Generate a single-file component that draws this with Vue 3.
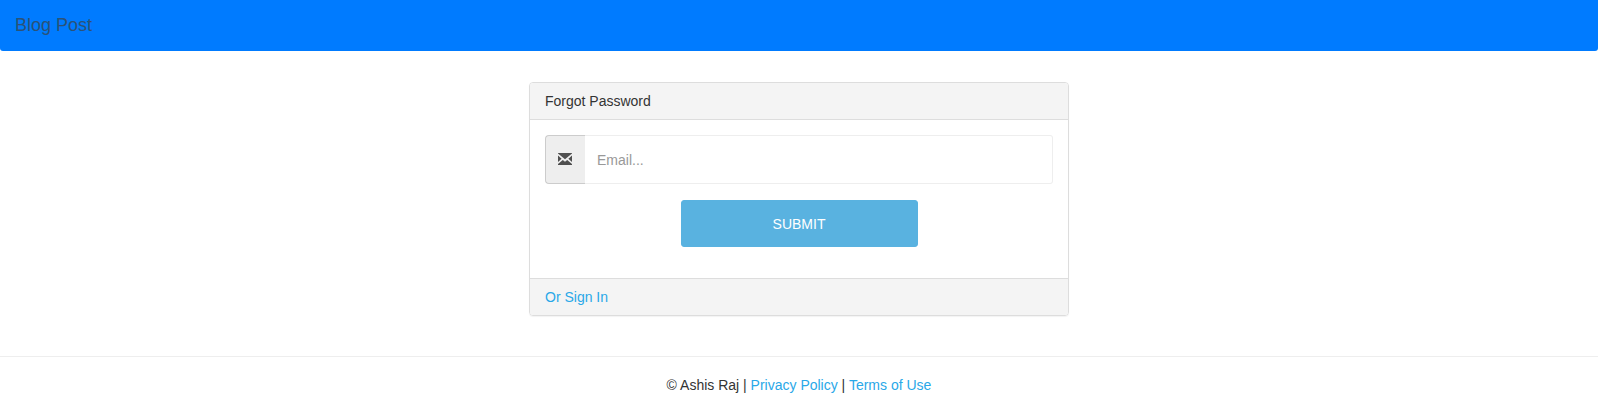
<script setup>
import { ref } from 'vue'
const email = ref('')
</script>

<template>
  <div class="page">
    <nav class="navbar"><a class="brand">Blog Post</a></nav>
    <main class="panel">
      <header class="heading">Forgot Password</header>
      <form class="body" @submit.prevent>
        <div class="group">
          <span class="addon">
            <svg width="14" height="12" viewBox="0 0 14 12" fill="#4f4f4f">
              <path d="M0 0H14V.5L7 6.2L0 .5Z" />
              <path d="M0 2.6L3.6 5.7L0 8.9Z" />
              <path d="M14 2.6L10.4 5.7L14 8.9Z" />
              <path d="M0 12V11.1L4.8 6.9L7 8.7L9.2 6.9L14 11.1V12Z" />
            </svg>
          </span>
          <input v-model="email" class="field" type="email" placeholder="Email..." />
        </div>
        <button class="submit" type="submit">SUBMIT</button>
      </form>
      <footer class="foot"><a class="link">Or Sign In</a></footer>
    </main>
    <footer class="site-footer">
      © Ashis Raj | <a class="link">Privacy Policy</a> | <a class="link">Terms of Use</a>
    </footer>
  </div>
</template>

<style>
body {
  margin: 0;
  background: #fff;
}
</style>

<style scoped>
.page {
  height: 414px;
  overflow: hidden;
  font: 14px/20px "Liberation Sans", Arial, sans-serif;
  color: #333;
}
.page * {
  box-sizing: border-box;
}
.navbar {
  height: 51px;
  padding: 15px;
  background: #007bff;
  border-radius: 0 0 3px 3px;
}
.brand {
  display: block;
  font-size: 18px;
  line-height: 20px;
  color: #2b5277;
}
.panel {
  width: 540px;
  height: 234px;
  margin: 31px auto 0;
  display: flex;
  flex-direction: column;
  border: 1px solid #ddd;
  border-radius: 4px;
  box-shadow: 0 1px 1px rgba(0, 0, 0, 0.05);
  overflow: hidden;
}
.heading {
  height: 37px;
  padding: 8px 15px;
  background: #f4f4f4;
  border-bottom: 1px solid #ddd;
}
.body {
  flex: 1;
  padding: 15px;
}
.group {
  display: flex;
  height: 49px;
}
.addon {
  width: 40px;
  display: flex;
  align-items: center;
  padding: 0 0 1px 12px;
  background: #eee;
  border: 1px solid #ccc;
  border-right: 0;
  border-radius: 4px 0 0 4px;
}
.field {
  flex: 1;
  min-width: 0;
  padding: 1px 12px 0;
  border: 1px solid #eee;
  border-left: 0;
  border-radius: 0 3px 3px 0;
  outline: none;
  background: #fff;
  font: inherit;
}
.field::placeholder {
  color: #999;
  opacity: 1;
}
.submit {
  display: block;
  width: 237px;
  height: 47px;
  margin: 16px 0 0 136px;
  padding: 0 1px 0 0;
  border: 1px solid #59b2e0;
  border-radius: 3px;
  background: #59b2e0;
  color: #fff;
  font: inherit;
}
.foot {
  height: 37px;
  padding: 8px 15px;
  background: #f4f4f4;
  border-top: 1px solid #ddd;
}
.link {
  color: #29a8e8;
}
.site-footer {
  margin-top: 40px;
  padding-top: 18px;
  border-top: 1px solid #eee;
  text-align: center;
}
</style>
